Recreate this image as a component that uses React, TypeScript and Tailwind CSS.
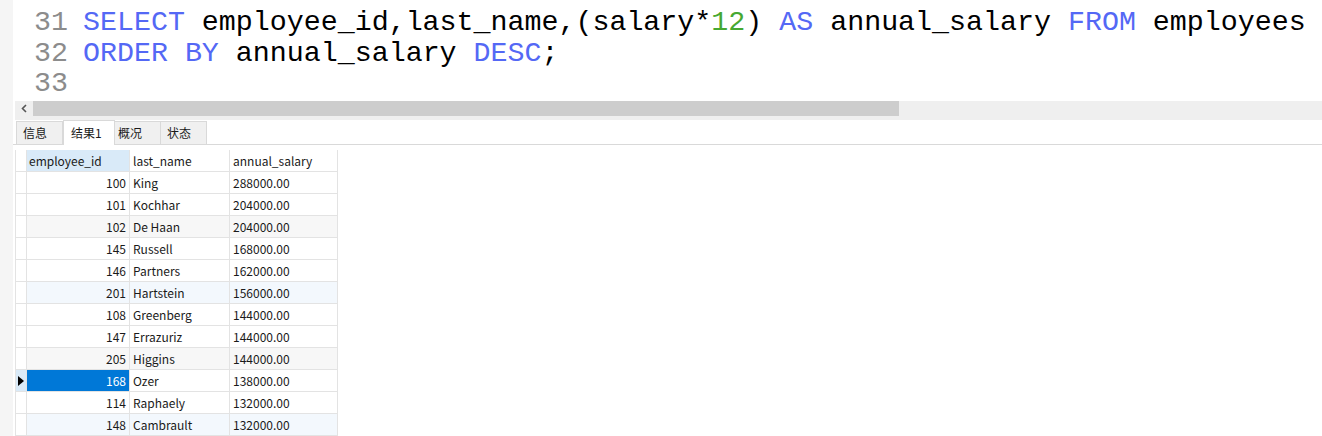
import React from "react";

const rows: [number, string, string][] = [
  [100, "King", "288000.00"],
  [101, "Kochhar", "204000.00"],
  [102, "De Haan", "204000.00"],
  [145, "Russell", "168000.00"],
  [146, "Partners", "162000.00"],
  [201, "Hartstein", "156000.00"],
  [108, "Greenberg", "144000.00"],
  [147, "Errazuriz", "144000.00"],
  [205, "Higgins", "144000.00"],
  [168, "Ozer", "138000.00"],
  [114, "Raphaely", "132000.00"],
  [148, "Cambrault", "132000.00"],
];

const KW = "text-[#5468f5]";

function CodeLine({ n, children }: { n: number; children?: React.ReactNode }) {
  return (
    <div className="flex h-[30.5px] items-center">
      <div className="w-[55px] text-right text-[#8c8c8c]">{n}</div>
      <div className="ml-[15px] whitespace-pre text-black">{children}</div>
    </div>
  );
}

export default function App() {
  return (
    <div className="relative flex h-[436px] w-[1322px] overflow-hidden bg-white">
      {/* left gray strip */}
      <div className="w-[13px] shrink-0 bg-[#f5f5f5]" />

      <div className="flex min-w-0 flex-1 flex-col">
        {/* editor */}
        <div className="h-[102px] pt-[7px] font-['Liberation_Mono',monospace] text-[28.3px] leading-none">
          <CodeLine n={31}>
            <span className={KW}>SELECT</span> employee_id,last_name,(salary*
            <span className="text-[#46a832]">12</span>) <span className={KW}>AS</span> annual_salary{" "}
            <span className={KW}>FROM</span> employees
          </CodeLine>
          <CodeLine n={32}>
            <span className={KW}>ORDER</span> <span className={KW}>BY</span> annual_salary{" "}
            <span className={KW}>DESC</span>;
          </CodeLine>
          <CodeLine n={33} />
        </div>

        {/* horizontal scrollbar */}
        <div className="flex h-[19px] pl-[2px]">
          <div className="flex h-full flex-1 bg-[#efefef]">
            <div className="flex h-[15px] w-[18px] items-center justify-center">
              <svg width="6" height="9" viewBox="0 0 6 9">
                <path d="M5 1 L1.5 4.5 L5 8" fill="none" stroke="#555" strokeWidth="1.6" />
              </svg>
            </div>
            <div className="h-[15px] w-[866px] bg-[#cdcdcd]" />
          </div>
        </div>

        {/* tabs */}
        <div className="flex h-[25px] items-end border-b border-[#d9d9d9] pl-[3px] font-['Noto_Sans_CJK_SC',sans-serif] text-[12px] text-[#1a1a1a]">
          <div className="flex h-[23px] w-[47px] items-center border border-b-0 border-[#d9d9d9] bg-[#f0f0f0] pl-[6px]">信息</div>
          <div className="-mb-px flex h-[25px] w-[52px] items-center border border-b-0 border-[#d9d9d9] bg-white pl-[7px]">结果1</div>
          <div className="flex h-[23px] w-[46px] items-center border border-b-0 border-l-0 border-[#d9d9d9] bg-[#f0f0f0] pl-[3px]">概况</div>
          <div className="flex h-[23px] w-[46px] items-center border border-b-0 border-l-0 border-[#d9d9d9] bg-[#f0f0f0] pl-[6px]">状态</div>
        </div>

        {/* result grid */}
        <div className="mt-[5px] w-fit pl-[2px] font-['Noto_Sans_CJK_SC',sans-serif] text-[12px] text-[#1a1a1a]">
          <div className="flex h-[22px]">
            <div className="w-[12px] border-b border-l border-r border-[#e3e3e3] bg-white" />
            <div className="flex w-[103px] items-center border-b border-r border-[#e3e3e3] bg-[#d9eaf8] pl-[2px]">employee_id</div>
            <div className="flex w-[100px] items-center border-b border-r border-[#e3e3e3] pl-[3px]">last_name</div>
            <div className="flex w-[108px] items-center border-b border-r border-[#e3e3e3] pl-[3px]">annual_salary</div>
          </div>
          {rows.map(([id, name, sal], i) => {
            const selected = id === 168;
            const bg = i % 3 === 2 ? (i % 6 === 2 ? "bg-[#f7f7f7]" : "bg-[#f3f8fd]") : "bg-white";
            return (
              <div key={id} className="flex h-[22px]">
                <div
                  className={`flex w-[12px] items-center justify-center border-b border-l border-r border-[#e3e3e3] ${
                    selected ? "bg-[#d9eaf8]" : "bg-white"
                  }`}
                >
                  {selected && (
                    <svg width="6" height="10" viewBox="0 0 6 10">
                      <path d="M0 0 L6 5 L0 10 Z" fill="#000" />
                    </svg>
                  )}
                </div>
                <div
                  className={`flex w-[103px] items-center justify-end border-b border-r border-[#e3e3e3] pr-[3px] ${
                    selected ? "bg-[#0078d7] text-white" : bg
                  }`}
                >
                  {id}
                </div>
                <div className={`flex w-[100px] items-center border-b border-r border-[#e3e3e3] pl-[3px] ${bg}`}>{name}</div>
                <div className={`flex w-[108px] items-center border-b border-r border-[#e3e3e3] pl-[3px] ${bg}`}>{sal}</div>
              </div>
            );
          })}
        </div>
      </div>
    </div>
  );
}
